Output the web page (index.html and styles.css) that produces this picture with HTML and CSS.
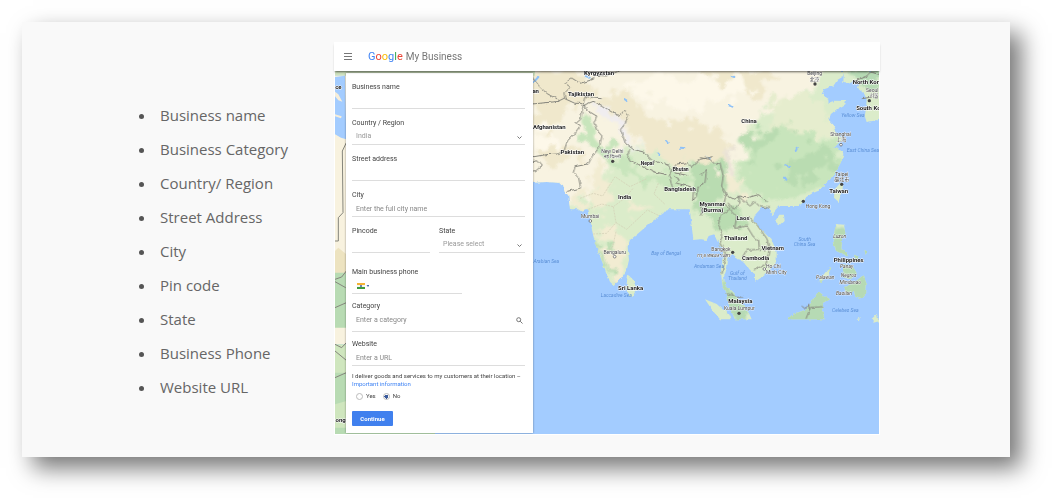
FILE: index.html
```html
<!DOCTYPE html>
<html lang="en">
<head>
<meta charset="utf-8">
<meta name="viewport" content="width=device-width, initial-scale=1">
<title>Google My Business</title>
<link rel="stylesheet" href="styles.css">
</head>
<body>
<main class="card">
  <ul class="details">
    <li>Business name</li>
    <li>Business Category</li>
    <li>Country/ Region</li>
    <li>Street Address</li>
    <li>City</li>
    <li>Pin code</li>
    <li>State</li>
    <li>Business Phone</li>
    <li>Website URL</li>
  </ul>

  <section class="app">
    <header class="bar">
      <button class="menu" type="button" aria-label="Menu">
        <svg viewBox="0 0 8 7" width="8" height="7"><path d="M0 .5h8M0 3.500h8M0 6.500h8" stroke="#777" stroke-width="1"/></svg>
      </button>
      <h1 class="brand"><span class="google"><span class="blue">G</span><span class="red">o</span><span class="yellow">o</span><span class="blue">g</span><span class="green">l</span><span class="red">e</span></span> <span class="product">My Business</span></h1>
    </header>

    <div class="stage">
      <svg class="map" viewBox="0 0 1632 1089" preserveAspectRatio="xMinYMin slice" role="img" aria-label="Map of Asia">
        <defs>
          <filter id="coast" x="-5%" y="-5%" width="110%" height="110%">
            <feTurbulence type="fractalNoise" baseFrequency="0.07" numOctaves="2" seed="4"/>
            <feDisplacementMap in="SourceGraphic" scale="10" xChannelSelector="R" yChannelSelector="G"/>
          </filter>
          <filter id="relief" x="-10%" y="-10%" width="120%" height="120%">
            <feTurbulence type="fractalNoise" baseFrequency="0.022" numOctaves="4" seed="9" result="n"/>
            <feDisplacementMap in="SourceGraphic" in2="n" scale="110" xChannelSelector="R" yChannelSelector="G"/>
            <feGaussianBlur stdDeviation="3"/>
          </filter>
          <clipPath id="land">
            <path transform="translate(585 -15)" d="M0 0H620V430H120L115 390 120 375 90 350 50 348 0 350Z"/>
            <path transform="translate(1095 -15)" d="M-20 0H438L428 32 412 42 400 60 372 70 365 85 385 98 386 112 405 104 438 105 436 115 412 128 392 145 386 165 405 185 412 208 428 216 415 232 402 246 428 256 430 268 422 290 405 320 385 345 360 368 320 392 300 420H-20Z"/>
            <path transform="translate(1095 -15)" d="M432 10 430 48 446 50 462 42 480 46 474 66 490 78 500 100 498 130 494 150 500 168 522 164 560 150V0Z"/>
            <path transform="translate(585 357)" d="M98 -20 106 10 145 30 120 35 126 46 155 65 170 54 176 62 182 95 186 120 195 160 220 225 240 275 250 285 262 277 280 255 290 240 297 210 293 170 300 150 325 130 365 95 400 70 410 58 426 46 442 42 462 40 480 55 500 75 512 110 514 148 530 140 560 130V-20Z"/>
            <path transform="translate(1095 357)" d="M-40 -20H372L356 2 310 20 270 35 235 50 226 60 221 76 212 66 205 52 186 52 165 75 160 90 185 120 215 150 230 185 230 215 195 255 165 275 165 252 150 240 132 215 115 207 97 192 86 200 82 230 72 260 76 285 100 310 130 345 148 372 155 388H105L88 350 80 310 66 280 63 240 70 190 60 165 50 150 36 118 20 150 0 148-20 150Z"/>
            <path transform="translate(585 357)" d="M295 255 312 272 320 300 308 320 295 318 288 290Z"/>
            <path transform="translate(1095 -15)" d="M422 350 430 358 416 408 402 395 404 370Z"/>
            <path transform="translate(1095 357)" d="M238 74 252 74 254 90 238 106 225 94ZM15 328 50 342 84 372 92 388H60L38 362ZM264 388 275 375 320 358 345 320 355 304 368 314 390 328 370 340 366 362 374 388ZM408 102 432 104 436 130 426 150 424 178 440 184 444 200 428 192 408 182 398 152ZM462 194 476 200 470 214ZM425 222 460 232 470 250 452 268 430 262ZM432 292 460 280 490 256 500 282 498 310 482 328 466 320 462 302 440 312ZM356 272 380 242 396 230 382 256 360 280Z"/>
            <path transform="translate(1095 357)" d="M470 388 482 382 480 394ZM514 388 530 372 538 394 520 398ZM494 184 502 186 498 196Z"/>
          </clipPath>
        </defs>

        <rect class="sea" width="1632" height="1089"/>
        <g filter="url(#coast)">
          <g clip-path="url(#land)">
            <rect fill="#dbecca" width="1680" height="800"/>
            <g filter="url(#relief)">
              <path fill="#f8f3e1" d="M560-60H1500L1440 40 1330 100 1250 160 1220 240 1180 330 1090 290 1000 260 900 220 850 250 800 330 740 400 560 400Z"/>
              <path fill="#f0e8cc" d="M590-30 720 20 780 60 700 130 640 190 590 160ZM770 90 860 60 960 150 1090 150 1190 200 1160 290 1080 290 980 270 900 200 830 120ZM620 250 720 210 720 260 640 290ZM1060-20 1340 10 1260 80 1190 50Z"/>
              <path fill="#fdf8e9" d="M860 30 960 10 1250 40 1220 80 1050 110 930 90ZM600 190 660 170 670 240 600 250Z"/>
              <path fill="#f2ecd2" d="M770 300 800 280 830 380 780 430ZM700 370 760 350 740 440ZM790 460 860 480 890 560 840 640 810 560ZM880 400 960 410 900 440ZM1130 290 1230 330 1210 400Z"/>
              <path fill="#e6edce" d="M1320 60 1460 90 1490 160 1440 210 1310 180Z"/>
              <path fill="#c8e5bc" d="M1250 180 1410 180 1520 220 1510 330 1390 390 1270 370 1210 310ZM750 130 800 200 860 260 960 310 1100 320 1100 350 920 330 800 270 740 180Z"/>
              <path fill="#b9dcb1" d="M1230 190 1380 160 1300 210 1240 280ZM1330 290 1480 220 1500 270 1370 350ZM1060 290 1160 270 1170 370 1090 430 1060 400ZM1110 430 1200 400 1240 470 1180 490ZM780 500 800 520 840 640 820 620Z"/>
              <path fill="#b6dab4" d="M1140 620 1190 640 1260 760 1190 740ZM1330 660 1480 620 1500 770 1330 770ZM1480 480 1640 460 1640 720 1520 700ZM1540-20 1700-20 1620 60 1570 50Z"/>
              <path fill="#f0edf0" d="M775 105 815 110 860 150 880 200 920 240 860 220 830 160Z"/>
              <path fill="#e9e2d6" d="M1160 230 1190 240 1190 310 1170 300Z"/>
            </g>
            <path class="lakes" d="M752 15 764 20M1190 15 1198 18M868 84 874 88M1180 102 1192 107M970 248 973 252M1037 230 1045 231M993 210 998 216M1118 258 1124 262M1354 282 1362 288M595 35 610 18M1385 230 1382 240M1350 320 1354 326"/>
          </g>
        </g>

        <g class="borders" filter="url(#coast)">
          <path transform="translate(585 -15)" d="M0 25 25 58 50 82 88 104 104 96 102 80 120 62 105 52 125 36 150 52 190 40 192 28 230 30 270 14M104 98 135 112 160 112 164 95 180 88 190 96 215 98M6 114 88 106M160 115 152 160 138 172 150 180 132 205 112 225 102 256 82 264 48 266 0 274M160 118 190 106 215 118 245 138 265 148 285 136 295 148 286 172 272 190 286 232 310 250 340 258 365 282 415 298 425 312 440 294 472 290 485 302 510 280 548 272M160 120 176 136 200 150 192 170 200 192 216 210 208 244 186 272 175 294 135 302 130 320 146 336 152 366 112 376M300 250 292 268 300 286 340 302 375 318 412 326M425 312 418 330 430 376M425 318 470 328M430 330 448 342 440 352 482 362 490 380 488 405 498 392 506 360 525 350 530 310M0 290 20 284 34 300 18 314 0 316"/>
          <path transform="translate(1095 -15)" d="M0 275 30 280 45 295 60 290 70 330 65 360 80 388 102 400 120 390 140 396 175 386 200 404M20 310 0 330M486 98 510 94 525 86M470 42 500 30 512 18 540 26"/>
          <path transform="translate(1095 357)" d="M0 80 8 62 0 46M80 10 72 40 90 56 60 80 55 105 68 135 60 160 78 190 70 230 66 252M84 38 100 60 120 38 114 18 128 30 150 48 165 36 180 50 212 54M90 60 110 80 104 115 140 108 160 140 176 150 178 178 140 180 128 200M145 80 172 106 200 145 208 176 180 182M208 178 198 222 162 240M308 348 318 356 326 342 328 360M318 386 332 352 368 350M80 310 112 322 130 320"/>
        </g>
        <g class="states">
          <path transform="translate(585 357)" d="M150 25 190 10 218 18 255-40 300-10 350-34M175 58 215 42 250 50 285 24 310-6M250 50 258 98 230 130 190 132M258 98 290 118 352 60 385 76M258 125 248 170 225 196M385-20 372 12 404 42"/>
        </g>

        <g>
          <path fill="#cfe2be" d="M0 0H600V14H0Z"/>
          <path fill="#f8f2df" d="M0 14H34V820H0Z"/>
          <path class="sea" d="M0 18 30 14 34 205 18 200 0 190Z"/>
          <path fill="#f6eeda" d="M0 62 10 70 22 92 10 88 0 76ZM0 130 20 136 18 142 0 136Z"/>
          <path fill="#ede3c0" d="M0 540 10 530 34 550V610H0Z"/>
          <path fill="#b8dbb3" d="M0 605H34V770H0ZM0 850H34V1089H0Z"/>
          <path fill="#cfe6be" d="M0 820H34V905H0ZM0 1000 34 990V1070H0Z"/>
          <path fill="#b8dbb3" d="M30 1084H300V1089H30Z"/>
          <g class="borders"><path d="M34 215 22 240 24 425 10 440V510H0M0 625 20 618 34 600M0 632 32 650M0 710 34 695M0 820 20 830 34 815M0 840 34 868M0 920 34 905"/></g>
        </g>

        <g class="country" text-anchor="middle">
          <text x="792" y="12">Kyrgyzstan</text>
          <text x="738" y="74">Tajikistan</text>
          <text x="10" y="55">ce</text>
          <text x="602" y="65">an</text>
          <text x="643" y="174">Afghanistan</text>
          <text x="712" y="250">Pakistan</text>
          <text x="869" y="385">India</text>
          <text x="1035" y="361">Bangladesh</text>
          <text class="minor" x="937" y="283">Nepal</text>
          <text class="minor" x="1037" y="300">Bhutan</text>
          <text x="1242" y="157">China</text>
          <text x="1602" y="39">North Korea</text>
          <text x="1613" y="116">South Korea</text>
          <text x="1511" y="366">Taiwan</text>
          <text x="1132" y="404">Myanmar</text>
          <text x="1132" y="423">(Burma)</text>
          <text x="1224" y="447">Laos</text>
          <text x="1202" y="507">Thailand</text>
          <text x="1313" y="537">Vietnam</text>
          <text x="1262" y="568">Cambodia</text>
          <text x="1216" y="696">Malaysia</text>
          <text x="1541" y="573">Philippines</text>
          <text x="887" y="657">Sri Lanka</text>
          <text x="17" y="1052">ong</text>
        </g>
        <g class="city" text-anchor="middle">
          <text x="832" y="245">New Delhi</text><text x="832" y="261">नई दिल्ली</text>
          <text x="765" y="440">Mumbai</text>
          <text x="839" y="549">Bengaluru</text>
          <text x="1439" y="13">Beijing</text><text x="1439" y="29">北京</text>
          <text x="1612" y="62">Seoul</text><text x="1617" y="78">서울</text>
          <text x="1517" y="194">Shanghai</text><text x="1519" y="211">上海</text>
          <text x="1520" y="314">Taipei</text><text x="1520" y="331">臺北市</text>
          <text x="1449" y="411">Hong Kong</text>
          <text x="1158" y="541">Bangkok</text><text x="1138" y="557">กรุงเทพมหานคร</text>
          <text x="1315" y="592">Ho Chi</text><text x="1324" y="609">Minh City</text>
          <text x="1213" y="717">Kuala Lumpur</text>
          <g class="island">
            <text x="1514" y="500">Luzon</text>
            <text x="1535" y="591">Panay</text>
            <text x="1541" y="619">Negros</text>
            <text x="1546" y="640">Mindanao</text>
            <text x="1471" y="623">Palawan</text>
            <text x="1527" y="673">Basilan</text>
          </g>
        </g>
        <g class="water" text-anchor="middle">
          <text x="634" y="575">Arabian Sea</text>
          <text x="844" y="679">Laccadive Sea</text>
          <text x="993" y="553">Bay of Bengal</text>
          <text x="1122" y="592">Andaman Sea</text>
          <text x="1207" y="611">Gulf of</text><text x="1207" y="627">Thailand</text>
          <text x="1409" y="511">South</text><text x="1409" y="526">China Sea</text>
          <text x="1554" y="138">Yellow Sea</text>
          <text x="1584" y="242">East China Sea</text>
          <text x="1531" y="724">Celebes Sea</text>
        </g>
        <g class="pins">
          <circle cx="833" cy="271" r="5"/><circle cx="1440" cy="39" r="5"/><circle cx="1603" cy="89" r="5"/>
          <circle cx="1520" cy="340" r="5"/><circle cx="1405" cy="391" r="5"/><circle cx="1193" cy="544" r="5"/><circle cx="1212" cy="727" r="5"/>
          <g class="open"><circle cx="766" cy="450" r="4"/><circle cx="839" cy="557" r="4"/><circle cx="1518" cy="221" r="4"/><circle cx="1288" cy="594" r="4"/></g>
        </g>
      </svg>

      <form class="panel">
        <div class="field">
          <label for="name">Business name</label>
          <input id="name" type="text">
        </div>
        <div class="field">
          <label for="country">Country / Region</label>
          <div class="control">
            <select id="country"><option>India</option></select>
            <svg class="chevron" viewBox="0 0 5 3"><path d="M.5.5 2.500 2.500 4.500.5"/></svg>
          </div>
        </div>
        <div class="field">
          <label for="street">Street address</label>
          <input id="street" type="text">
        </div>
        <div class="field">
          <label for="city">City</label>
          <input id="city" type="text" placeholder="Enter the full city name">
        </div>
        <div class="pair">
          <div class="field">
            <label for="pin">Pincode</label>
            <input id="pin" type="text">
          </div>
          <div class="field">
            <label for="state">State</label>
            <div class="control">
              <select id="state"><option>Please select</option></select>
              <svg class="chevron" viewBox="0 0 5 3"><path d="M.5.5 2.500 2.500 4.500.5"/></svg>
            </div>
          </div>
        </div>
        <div class="field phone">
          <label for="phone">Main business phone</label>
          <div class="phone-row">
            <button class="flag" type="button" aria-label="Country code, India">
              <svg viewBox="0 0 12 6" width="12" height="6"><path fill="#f5b335" d="M0 0h8v2H0z"/><path fill="#f4f6f2" d="M0 2h8v2H0z"/><path fill="#3f9a3c" d="M0 4h8v2H0z"/><circle cx="4" cy="3" r="1" fill="#42609a"/><path fill="#4a6fae" d="M9.500 2h3l-1.500 2z"/></svg>
            </button>
            <input id="phone" type="tel">
          </div>
        </div>
        <div class="field category">
          <label for="category">Category</label>
          <div class="control">
            <input id="category" type="text" placeholder="Enter a category">
            <svg class="search" viewBox="0 0 7 7"><circle cx="2.700" cy="2.700" r="2"/><path d="M4.200 4.200 6.500 6.500"/></svg>
          </div>
        </div>
        <div class="field">
          <label for="url">Website</label>
          <input id="url" type="text" placeholder="Enter a URL">
        </div>
        <fieldset class="delivery">
          <legend>I deliver goods and services to my customers at their location – <a href="#info">Important information</a></legend>
          <div class="choices">
            <label><input type="radio" name="deliver"> Yes</label>
            <label><input type="radio" name="deliver" checked> No</label>
          </div>
        </fieldset>
        <button class="continue" type="submit">Continue</button>
      </form>
    </div>
  </section>
</main>
</body>
</html>
```
FILE: styles.css
```css
* { box-sizing: border-box; }

body {
  margin: 0;
  padding: 22px 42px 42px 22px;
  background: #fff;
  font-family: "Open Sans", sans-serif;
}

.card {
  display: grid;
  grid-template-columns: 312px minmax(0, 1fr);
  align-items: start;
  padding: 20px 130px 22px 0;
  background: #f9f9f9;
  box-shadow: 11px 11px 22px rgba(0, 0, 0, 0.54);
}

.details {
  margin: 0;
  padding: 56px 0 0 138px;
  color: #666;
  font-size: 15px;
  line-height: 34px;
  list-style: none;
}

.details li {
  display: flex;
  align-items: center;
}

.details li::before {
  content: "";
  width: 5px;
  height: 5px;
  margin: 2px 16px 0 -21px;
  border-radius: 50%;
  background: #555;
}

/* Sign-up screen */
.app {
  padding-bottom: 1px;
  background: #fff;
  font-family: Roboto, sans-serif;
  color: #444;
}

.bar {
  position: relative;
  z-index: 1;
  display: flex;
  align-items: center;
  gap: 16px;
  height: 29px;
  padding: 0 10px;
  background: #fff;
  box-shadow: 0 2px 2px -1px rgba(0, 0, 0, 0.6);
}

.menu, .flag {
  display: flex;
  padding: 0;
  border: 0;
  background: none;
}

.brand {
  display: flex;
  align-items: baseline;
  gap: 3px;
  margin: 0;
  font-size: 10px;
  font-weight: 400;
  line-height: 16px;
  color: #777;
}

.google { font-size: 11px; }
.blue { color: #4285f4; }
.red { color: #ea4335; }
.yellow { color: #fbbc05; }
.green { color: #34a853; }

.stage {
  position: relative;
  margin: 0 1px;
  padding: 2px 0 1px 11px;
  overflow: hidden;
}

.map {
  position: absolute;
  inset: 0;
  width: 100%;
  height: 100%;
}

.sea { fill: #a3ccff; }
.lakes { stroke: #8fc1f7; stroke-width: 6; fill: none; stroke-linecap: round; }
.borders { fill: none; stroke: #85857c; stroke-width: 3; stroke-linejoin: round; }
.states { fill: none; stroke: #d2cdb4; stroke-width: 2; stroke-dasharray: 6 3; }
.country, .city, .water { paint-order: stroke; stroke-linejoin: round; font-family: Roboto, "Noto Sans", "Noto Sans CJK SC", "Noto Sans CJK KR", sans-serif; }
.country { fill: #222; stroke: #fff; stroke-width: 3; font-size: 18px; font-weight: 700; }
.country .minor { font-size: 15px; }
.city { fill: #444; stroke: #fff; stroke-width: 2; font-size: 15px; }
.island { font-style: italic; }
.water { fill: #5b8fd6; font-size: 15px; font-style: italic; }
.pins { fill: #444; }
.open { fill: #fff; stroke: #555; stroke-width: 2; }

/* Form */
.panel {
  position: relative;
  display: flex;
  flex-direction: column;
  gap: 8px;
  width: 187px;
  padding: 8px 8px 7px 6px;
  background: #fff;
  box-shadow: 0 0 2px rgba(0, 0, 0, 0.4);
}

.field { display: flex; flex-direction: column; }

.field label {
  font-size: 7px;
  line-height: 12px;
}

.field input, .field select {
  display: block;
  width: 100%;
  min-width: 0;
  height: 16px;
  padding: 0 4px;
  border: 0;
  border-bottom: 1px solid #ddd;
  border-radius: 0;
  background: none;
  color: #999;
  font: 7px/15px Roboto, sans-serif;
  appearance: none;
}

.field input::placeholder { color: #888; opacity: 1; }

.control { position: relative; }

.chevron, .search {
  position: absolute;
  fill: none;
  stroke: #777;
  stroke-width: 1;
}
.chevron { top: 7px; right: 3px; width: 5px; height: 3px; }
.search { top: 5px; right: 2px; width: 7px; height: 7px; }

.pair { display: grid; grid-template-columns: 78px 1fr; gap: 9px; }

.phone { width: 110px; margin-top: 5px; }
.phone-row { display: flex; align-items: center; border-bottom: 1px solid #ddd; }
.field .phone-row input { height: 15px; border: 0; }
.flag { padding-left: 5px; }

.category { margin: -2px 0; }
.field.category input { height: 20px; padding-bottom: 4px; }

.delivery { min-width: 0; margin: -2px 0 0; padding: 0; border: 0; }
.delivery legend { padding: 0; font-size: 6px; line-height: 8px; }
.delivery a { color: #4285f4; text-decoration: none; }

.choices { display: flex; gap: 7px; padding: 3px 0 0 4px; }
.choices label { display: flex; align-items: center; gap: 3px; font-size: 6px; line-height: 10px; }
.choices input {
  width: 7px;
  height: 7px;
  margin: 0;
  border: 1px solid #bbb;
  border-radius: 50%;
  background: #fff;
  appearance: none;
}
.choices input:checked { background: radial-gradient(circle, #3a5a9c 2px, #fff 2px); }

.continue {
  align-self: flex-start;
  width: 41px;
  height: 15px;
  margin-top: 2px;
  padding: 0;
  border: 0;
  border-radius: 1px;
  background: #4080ee;
  color: #fff;
  font: 700 6px/15px Roboto, sans-serif;
}
```
